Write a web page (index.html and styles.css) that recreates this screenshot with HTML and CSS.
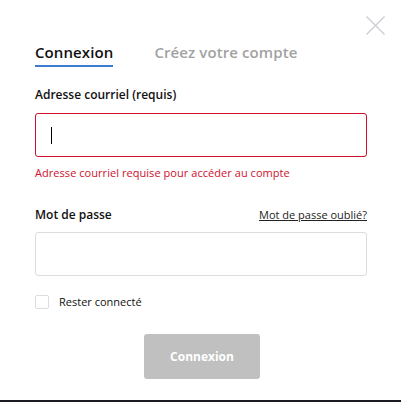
FILE: index.html
```html
<!DOCTYPE html>
<html lang="fr">
<head>
<meta charset="utf-8">
<link rel="stylesheet" href="styles.css">
</head>
<body>
<div class="modal">
  <button class="close" aria-label="Fermer">
    <svg width="19" height="19" viewBox="0 0 19 19"><path d="M0.5 0.5L18.5 18.5M18.5 0.5L0.5 18.5" stroke="#c9ccd4" stroke-width="1.2" fill="none"/></svg>
  </button>
  <div class="tabs">
    <span class="tab active">Connexion</span>
    <span class="tab">Créez votre compte</span>
  </div>
  <div class="field">
    <label class="label">Adresse courriel (requis)</label>
    <div class="input error"><span class="caret"></span></div>
    <div class="error-msg">Adresse courriel requise pour accéder au compte</div>
  </div>
  <div class="field pw">
    <div class="label-row">
      <label class="label">Mot de passe</label>
      <a class="forgot" href="#">Mot de passe oublié?</a>
    </div>
    <div class="input"></div>
  </div>
  <label class="remember"><span class="box"></span>Rester connecté</label>
  <div class="actions"><button class="submit">Connexion</button></div>
</div>
<div class="bottom-edge"></div>
</body>
</html>
```
FILE: styles.css
```css
html, body { margin: 0; padding: 0; background: #fff; }
body {
  font-family: "Open Sans", "Liberation Sans", sans-serif;
  color: #111;
  width: 401px;
  height: 402px;
  display: flex;
  flex-direction: column;
  overflow: hidden;
}
.modal {
  position: relative;
  flex: 1;
  padding: 41px 34px 0 35px;
}
.close {
  position: absolute;
  top: 16px;
  right: 16px;
  border: 0;
  background: none;
  padding: 0;
  width: 19px;
  height: 19px;
}
.close svg { display: block; }
.tabs {
  display: flex;
  gap: 41px;
}
.tab {
  font-size: 15px;
  font-weight: 600;
  letter-spacing: 0.1px;
  color: #a2a2a2;
  line-height: 22px;
  padding-bottom: 2px;
}
.tab.active {
  color: #111;
  border-bottom: 2px solid #3a7bd5;
}
.field { margin-top: 20px; }
.label {
  display: block;
  font-size: 12px;
  font-weight: 600;
  line-height: 16px;
  color: #111;
}
.input {
  margin-top: 10px;
  height: 42px;
  border: 1px solid #ddd;
  border-radius: 3px;
  display: flex;
  align-items: center;
  padding-left: 15px;
}
.input.error { border-color: #d0102b; }
.caret {
  width: 1px;
  height: 17px;
  background: #000;
}
.error-msg {
  margin-top: 8px;
  font-size: 11px;
  letter-spacing: 0.05px;
  line-height: 16px;
  color: #d0102b;
}
.field.pw { margin-top: 26px; }
.field.pw .input { margin-top: 9px; }
.label-row {
  display: flex;
  justify-content: space-between;
  align-items: center;
  height: 16px;
}
.forgot {
  font-size: 11px;
  line-height: 16px;
  color: #222;
  text-decoration: underline;
}
.remember {
  margin-top: 18px;
  display: flex;
  align-items: center;
  gap: 10px;
  font-size: 11px;
  line-height: 16px;
  color: #111;
}
.box {
  width: 12px;
  height: 12px;
  border: 1px solid #ddd;
  border-radius: 2px;
}
.actions {
  margin-top: 24px;
  display: flex;
  justify-content: center;
}
.submit {
  width: 116px;
  height: 45px;
  border: 0;
  border-radius: 3px;
  background: #c0c0c0;
  color: #fff;
  font-family: inherit;
  font-size: 12px;
  font-weight: 700;
  margin-left: 2px;
}
.bottom-edge {
  height: 2px;
  background: #1a1a22;
}
```
